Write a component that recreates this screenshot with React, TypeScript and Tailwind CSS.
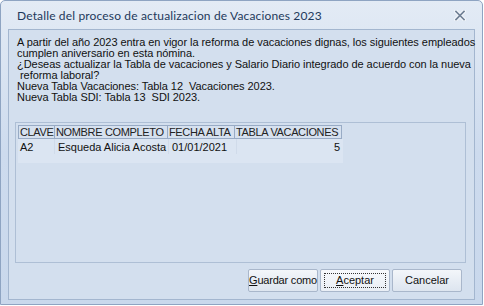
import React from "react";

const cols = [
  { name: "CLAVE", w: "w-[37px]" },
  { name: "NOMBRE COMPLETO", w: "w-[114px]" },
  { name: "FECHA ALTA", w: "w-[68px]" },
  { name: "TABLA VACACIONES", w: "w-[108px]" },
];

function CloseGlyph() {
  return (
    <svg width="12" height="11" viewBox="0 0 12 11">
      <path d="M2 1.5 L10 9.5 M10 1.5 L2 9.5" stroke="#f4f7fb" strokeWidth="3.8" strokeLinecap="square" />
      <path d="M2 1.5 L10 9.5 M10 1.5 L2 9.5" stroke="#6f7f94" strokeWidth="1.7" strokeLinecap="square" />
    </svg>
  );
}

export default function App() {
  return (
    <div className="w-[484px] h-[306px] bg-white overflow-hidden font-['Liberation_Sans',Arial,sans-serif]">
      <div className="w-[483px] h-[305px] border border-[#8ea4c2] rounded-t-[5px] bg-gradient-to-b from-[#e3ebf5] via-[#cddbee] to-[#c9d8ec] flex flex-col">
        {/* titulo */}
        <div className="h-[28px] flex items-center justify-between pl-[16px] pr-[16px]">
          <span className="text-[12px] text-[#1e395b] font-['Lato',sans-serif] tracking-[0.15px] pt-[2px]">
            Detalle del proceso de actualizacion de Vacaciones 2023
          </span>
          <CloseGlyph />
        </div>

        {/* panel */}
        <div className="flex-1 mx-[7px] mb-[4px] border border-[#a3b6cf] bg-[#d3dfee] flex flex-col">
          <div className="pl-[8px] pt-[7px] text-[11px] leading-[11px] text-[#111] whitespace-pre tracking-[-0.05px]">
            <p>A partir del año 2023 entra en vigor la reforma de vacaciones dignas, los siguientes empleados</p>
            <p>cumplen aniversario en esta nómina.</p>
            <p>¿Deseas actualizar la Tabla de vacaciones y Salario Diario integrado de acuerdo con la nueva</p>
            <p> reforma laboral?</p>
            <p>Nueva Tabla Vacaciones: Tabla 12  Vacaciones 2023.</p>
            <p>Nueva Tabla SDI: Tabla 13  SDI 2023.</p>
          </div>

          {/* grid */}
          <div className="ml-[6px] mr-[8px] mt-[19px] h-[141px] border border-[#aebfd5] pt-[2px] pl-[2px]">
            <div className="flex text-[11px] leading-[12px] text-[#222] tracking-[-0.35px]">
              {cols.map((c) => (
                <div
                  key={c.name}
                  className={`${c.w} h-[14px] border border-[#98abc5] -ml-px first:ml-0 bg-[#d6e1ef] px-[1px] flex items-center whitespace-nowrap overflow-hidden`}
                >
                  {c.name}
                </div>
              ))}
            </div>
            <div className="w-[325px] bg-[#dbe5f2]">
              <div className="flex text-[11px] leading-[12px] text-[#111] h-[15px]">
                <div className="w-[37px] px-[2px] flex items-center border-r border-[#d0dbea]">A2</div>
                <div className="w-[114px] px-[3px] flex items-center border-r border-[#d0dbea] whitespace-nowrap">Esqueda Alicia Acosta</div>
                <div className="w-[68px] px-[3px] flex items-center border-r border-[#d0dbea]">01/01/2021</div>
                <div className="w-[106px] px-[3px] flex items-center justify-end">5</div>
              </div>
              <div className="h-[9px]" />
            </div>
          </div>

          {/* botones */}
          <div className="flex justify-end gap-[2px] mr-[12px] mt-[6px] text-[11px] text-[#111] whitespace-nowrap">
            <button className="w-[70px] h-[23px] rounded-[2px] border border-[#a9b7cb] bg-gradient-to-b from-[#f3f6fa] to-[#dde5ef] tracking-[-0.2px]">
              <span className="underline">G</span>uardar como
            </button>
            <button className="w-[70px] h-[23px] rounded-[2px] border border-[#a9b7cb] bg-gradient-to-b from-[#f7f9fc] to-[#e9eef5] p-[3px]">
              <span className="w-full h-full border border-dotted border-[#333] flex items-center justify-center">
                <span><span className="underline">A</span>ceptar</span>
              </span>
            </button>
            <button className="w-[70px] h-[23px] rounded-[2px] border border-[#a9b7cb] bg-gradient-to-b from-[#f3f6fa] to-[#dde5ef]">
              Cancelar
            </button>
          </div>
        </div>
      </div>
    </div>
  );
}
